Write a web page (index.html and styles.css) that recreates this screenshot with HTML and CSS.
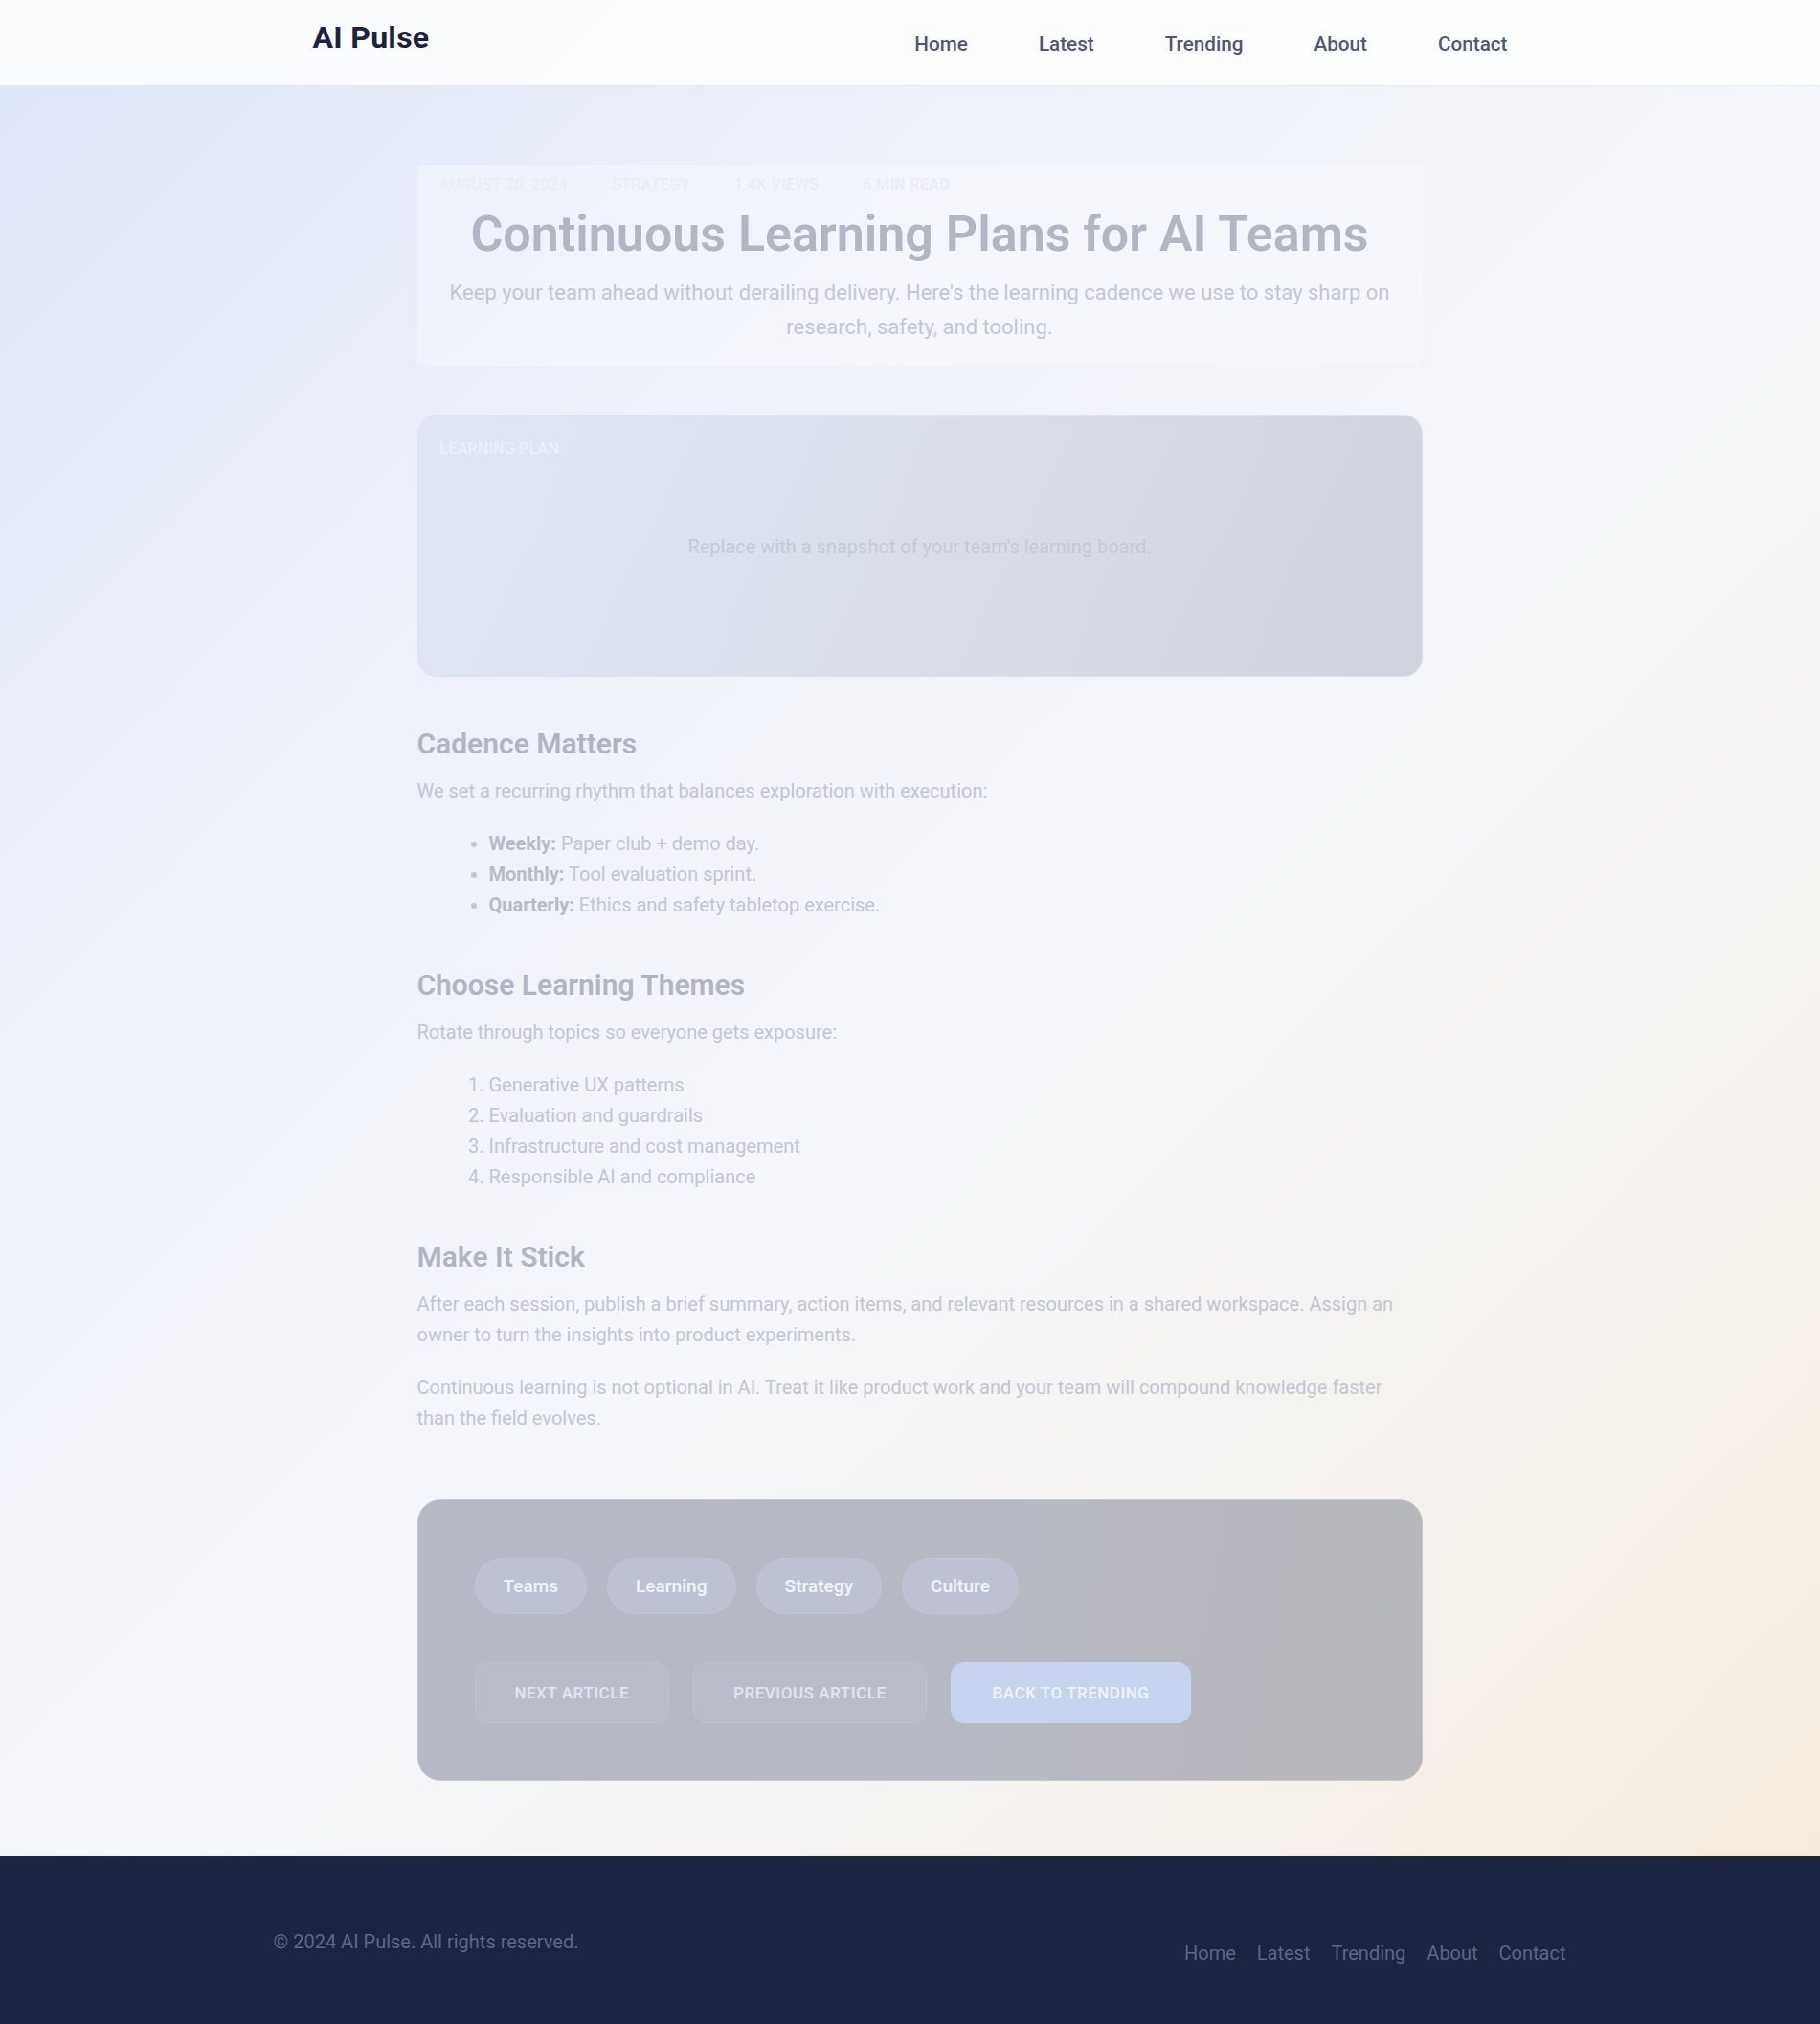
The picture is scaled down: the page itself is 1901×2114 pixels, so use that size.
FILE: index.html
```html
<!DOCTYPE html>
<html lang="en">
<head>
<meta charset="utf-8">
<title>Continuous Learning Plans for AI Teams — AI Pulse</title>
<link rel="stylesheet" href="styles.css">
</head>
<body>
<div class="page-bg">
  <header class="site-header">
    <div class="header-inner">
      <a class="logo" href="#">AI Pulse</a>
      <nav class="main-nav">
        <a href="#">Home</a>
        <a href="#">Latest</a>
        <a href="#">Trending</a>
        <a href="#">About</a>
        <a href="#">Contact</a>
      </nav>
    </div>
  </header>

  <main class="main">
    <article class="article">
      <div class="hero">
        <div class="meta">
          <span>August 30, 2024</span>
          <span>Strategy</span>
          <span>1.4K Views</span>
          <span>6 min read</span>
        </div>
        <h1 class="title">Continuous Learning Plans for AI Teams</h1>
        <p class="dek">Keep your team ahead without derailing delivery. Here's the learning cadence we use to stay sharp on research, safety, and tooling.</p>
      </div>

      <figure class="plan-figure">
        <span class="figure-label">Learning Plan</span>
        <p class="figure-text">Replace with a snapshot of your team's learning board.</p>
      </figure>

      <section class="section">
        <h2>Cadence Matters</h2>
        <p>We set a recurring rhythm that balances exploration with execution:</p>
        <ul class="list">
          <li><strong>Weekly:</strong> Paper club + demo day.</li>
          <li><strong>Monthly:</strong> Tool evaluation sprint.</li>
          <li><strong>Quarterly:</strong> Ethics and safety tabletop exercise.</li>
        </ul>
      </section>

      <section class="section">
        <h2>Choose Learning Themes</h2>
        <p>Rotate through topics so everyone gets exposure:</p>
        <ol class="list">
          <li>Generative UX patterns</li>
          <li>Evaluation and guardrails</li>
          <li>Infrastructure and cost management</li>
          <li>Responsible AI and compliance</li>
        </ol>
      </section>

      <section class="section">
        <h2>Make It Stick</h2>
        <p>After each session, publish a brief summary, action items, and relevant resources in a shared workspace. Assign an owner to turn the insights into product experiments.</p>
        <p>Continuous learning is not optional in AI. Treat it like product work and your team will compound knowledge faster than the field evolves.</p>
      </section>

      <div class="article-footer">
        <div class="tags">
          <a class="tag" href="#">Teams</a>
          <a class="tag" href="#">Learning</a>
          <a class="tag" href="#">Strategy</a>
          <a class="tag" href="#">Culture</a>
        </div>
        <div class="actions">
          <a class="btn" href="#">Next Article</a>
          <a class="btn" href="#">Previous Article</a>
          <a class="btn btn-primary" href="#">Back to Trending</a>
        </div>
      </div>
    </article>
  </main>
</div>

<footer class="site-footer">
  <div class="footer-inner">
    <p class="copyright">© 2024 AI Pulse. All rights reserved.</p>
    <nav class="footer-nav">
      <a href="#">Home</a>
      <a href="#">Latest</a>
      <a href="#">Trending</a>
      <a href="#">About</a>
      <a href="#">Contact</a>
    </nav>
  </div>
</footer>
</body>
</html>
```

FILE: styles.css
```css
* { box-sizing: border-box; }

html, body {
  margin: 0;
  padding: 0;
}

body {
  font-family: "Segoe UI", Roboto, "Noto Sans", sans-serif;
  color: #c2c6d3;
  background: #1b2441;
}

a { text-decoration: none; color: inherit; }

.page-bg {
  background: linear-gradient(135deg, #dce5f8 0%, #eef1f9 30%, #f5f6fa 55%, #f5f2ee 78%, #f5ebdd 100%);
}

/* Header */
.site-header {
  height: 90px;
  background: rgba(255, 255, 255, 0.86);
  border-bottom: 1px solid #e6e9f0;
}

.header-inner {
  max-width: 1248px;
  margin: 0 auto;
  display: flex;
  justify-content: space-between;
  align-items: flex-start;
  padding-top: 19px;
}

.logo {
  font-size: 32px;
  font-weight: 700;
  line-height: 40px;
  color: #1c2340;
  letter-spacing: 0.3px;
}

.main-nav {
  display: flex;
  gap: 74px;
  padding-top: 13px;
}

.main-nav a {
  font-size: 20.7px;
  font-weight: 500;
  line-height: 28px;
  color: #4f5775;
}

/* Main */
.main {
  padding: 82px 0 79px 20px;
}

.article {
  max-width: 1050px;
  margin: 0 auto;
}

.hero {
  background: rgba(255, 255, 255, 0.3);
  padding: 10px 24px 22px;
  text-align: center;
}

.meta {
  display: flex;
  gap: 46px;
  font-size: 16px;
  line-height: 22px;
  text-transform: uppercase;
  letter-spacing: 0.4px;
  color: #e9ecf5;
  font-weight: 500;
}

.title {
  margin: 10px 0 0;
  font-size: 52px;
  font-weight: 600;
  line-height: 62px;
  color: #b2b5c4;
}

.dek {
  margin: 12px 0 0;
  font-size: 22px;
  line-height: 36px;
  color: #c3c7d5;
}

.plan-figure {
  margin: 51px 0 0;
  height: 274px;
  border-radius: 20px;
  border: 1px solid #dfe3ee;
  background: linear-gradient(115deg, #dfe7f6 0%, #dbe0ed 40%, #d6dae5 70%, #cfd3de 100%);
  display: flex;
  flex-direction: column;
  padding: 24px 23px;
}

.figure-label {
  font-size: 16px;
  line-height: 22px;
  text-transform: uppercase;
  letter-spacing: 0.3px;
  color: #eef2fb;
}

.figure-text {
  margin: 0;
  flex: 1;
  display: flex;
  align-items: center;
  justify-content: center;
  font-size: 20px;
  line-height: 28px;
  color: #c5c9d6;
  padding-bottom: 20px;
}

/* Sections */
.section h2 {
  margin: 49px 0 14px;
  font-size: 30px;
  font-weight: 600;
  line-height: 38px;
  color: #b1b5c3;
}

.section:first-of-type h2 {
  margin-top: 51px;
}

.section p {
  margin: 0 0 23px;
  font-size: 20px;
  line-height: 32px;
}

.section p:last-child {
  margin-bottom: 0;
}

.list {
  margin: 0;
  padding-left: 75px;
  font-size: 20px;
  line-height: 32px;
}

.list strong {
  font-weight: 700;
  color: #b7bbc8;
}

/* Article footer panel */
.article-footer {
  margin-top: 69px;
  border-radius: 24px;
  background: linear-gradient(100deg, #b6b9c6 0%, #b7b9c4 55%, #b7b7bb 100%);
  border: 1px solid #c8cad3;
  padding: 60px 59px 59px;
}

.tags {
  display: flex;
  gap: 21px;
}

.tag {
  display: inline-block;
  font-size: 19px;
  font-weight: 600;
  line-height: 27px;
  padding: 15px 29px;
  border-radius: 999px;
  background: #bcc2d2;
  border: 1px solid #c2c8d8;
  color: #f0f2f8;
}

.actions {
  display: flex;
  gap: 25px;
  margin-top: 50px;
}

.btn {
  display: inline-block;
  font-size: 17px;
  font-weight: 600;
  line-height: 24px;
  letter-spacing: 0.5px;
  text-transform: uppercase;
  padding: 19px 41px;
  border-radius: 14px;
  background: #b9bdca;
  border: 1px solid #bfc3d0;
  color: #dfe3ef;
}

.btn-primary {
  background: #c5d3ee;
  border-color: #cad6ee;
  color: #eef2fb;
  padding-left: 43px;
  padding-right: 43px;
}

/* Footer */
.site-footer {
  background: #1b2441;
  padding: 75px 0 61px 20px;
}

.footer-inner {
  max-width: 1350px;
  margin: 0 auto;
  display: flex;
  justify-content: space-between;
  align-items: flex-start;
}

.copyright {
  margin: 0;
  font-size: 20px;
  line-height: 28px;
  color: #5c6688;
}

.footer-nav {
  display: flex;
  gap: 22px;
  margin-top: 12px;
}

.footer-nav a {
  font-size: 20px;
  line-height: 28px;
  color: #5c6688;
}
```
